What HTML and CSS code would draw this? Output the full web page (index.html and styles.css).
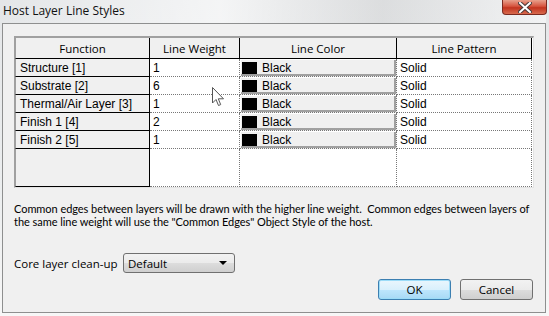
FILE: index.html
```html
<!DOCTYPE html>
<html lang="en">
<head>
  <meta charset="UTF-8">
  <title>Host Layer Line Styles</title>
  <link rel="stylesheet" href="styles.css">
</head>
<body>
  <div class="window">
    <!-- Title bar -->
    <div class="titlebar">
      <span class="title">Host Layer Line Styles</span>
      <button class="close" aria-label="Close">
        <svg width="14" height="11" viewBox="0 0 14 11">
          <path d="M2 1 L12 10 M12 1 L2 10" stroke="#4a3a3a" stroke-width="4" stroke-linecap="square"/>
          <path d="M2 1 L12 10 M12 1 L2 10" stroke="#fff" stroke-width="2" stroke-linecap="square"/>
        </svg>
      </button>
    </div>

    <div class="client">
      <!-- Layer grid -->
      <div class="grid">
        <div class="hcell">Function</div>
        <div class="hcell">Line Weight</div>
        <div class="hcell">Line Color</div>
        <div class="hcell">Line Pattern</div>

        <div class="fcell">Structure [1]</div>
        <div class="wcell">1</div>
        <div class="ccell"><span class="swatch"></span>Black</div>
        <div class="pcell">Solid</div>

        <div class="fcell">Substrate [2]</div>
        <div class="wcell">6</div>
        <div class="ccell"><span class="swatch"></span>Black</div>
        <div class="pcell">Solid</div>

        <div class="fcell">Thermal/Air Layer [3]</div>
        <div class="wcell">1</div>
        <div class="ccell"><span class="swatch"></span>Black</div>
        <div class="pcell">Solid</div>

        <div class="fcell">Finish 1 [4]</div>
        <div class="wcell">2</div>
        <div class="ccell"><span class="swatch"></span>Black</div>
        <div class="pcell">Solid</div>

        <div class="fcell">Finish 2 [5]</div>
        <div class="wcell">1</div>
        <div class="ccell"><span class="swatch"></span>Black</div>
        <div class="pcell">Solid</div>

        <div class="fcell filler"></div>
        <div class="wcell filler"></div>
        <div class="wcell filler"></div>
        <div class="pcell filler"></div>

        <!-- mouse pointer -->
        <svg class="pointer" width="13" height="20" viewBox="0 0 13 20">
          <path d="M0.5 0.5 L0.5 16 L4 12.5 L6.5 18.5 L8.7 17.6 L6.3 11.8 L11.5 11.8 Z" fill="#fff" stroke="#555" stroke-width="1"/>
        </svg>
      </div>

      <p class="note">Common edges between layers will be drawn with the higher line weight.&nbsp; Common edges between layers of<br>the same line weight will use the "Common Edges" Object Style of the host.</p>

      <div class="cleanup">
        <span>Core layer clean-up</span>
        <div class="select">
          <span>Default</span>
          <svg width="8" height="4" viewBox="0 0 8 4"><path d="M0 0 L8 0 L4 4 Z" fill="#000"/></svg>
        </div>
      </div>

      <div class="buttons">
        <button class="btn default">OK</button>
        <button class="btn">Cancel</button>
      </div>
    </div>
  </div>
</body>
</html>
```

FILE: styles.css
```css
* { box-sizing: border-box; margin: 0; padding: 0; }
body { width: 549px; height: 316px; overflow: hidden; font-family: "Open Sans", sans-serif; font-size: 11.5px; color: #000; }

.window {
  width: 549px; height: 316px;
  background: linear-gradient(to bottom, #e4e6e8 0, #eceeef 60%, #f7f7f7 100%);
  padding: 0 3px 3px 2px;
  display: flex; flex-direction: column;
}
.titlebar {
  height: 23px; display: flex; justify-content: space-between; align-items: flex-start;
  background: linear-gradient(to right, rgba(255,255,255,0) 0, rgba(255,255,255,0.6) 40%, rgba(200,200,200,0.3) 70%, rgba(255,255,255,0.5) 100%);
}
.title { font-size: 12px; padding: 2px 0 0 1px; color: #111; }
.close {
  width: 45px; height: 15px; border: 1px solid #7a2a20; border-top: none;
  border-radius: 0 0 4px 4px;
  background: linear-gradient(to bottom, #e8a08c 0, #d6543e 45%, #c2341f 55%, #d86a4e 100%);
  display: flex; align-items: center; justify-content: center;
  margin-right: -1px;
}

.client {
  flex: 1; background: #f0f0f0; border: 1px solid #8e8f8f;
  padding: 12px 11px 0 11px;
}

/* grid */
.grid {
  position: relative;
  width: 520px; height: 152px;
  display: grid;
  grid-template-columns: 135px 90px 157px 135px;
  grid-template-rows: 21px 18px 18px 18px 18px 18px 1fr;
  border: 1px solid #a0a0a0; border-right-color: #e3e3e3; border-bottom-color: #e3e3e3;
  border-top-width: 2px;
  background: #fff;
  font-family: "Liberation Sans", sans-serif; font-size: 12px;
}
.hcell {
  background: #f0f0f0; border-right: 1px solid #000; border-bottom: 1px solid #000;
  font-family: "Open Sans", sans-serif; font-size: 11.5px;
  display: flex; align-items: center; justify-content: center;
}
.hcell:first-child { border-left: 1px solid #a0a0a0; }
.fcell {
  background: #f0f0f0; border-right: 1px solid #000; border-bottom: 1px solid #000;
  border-left: 1px solid #a0a0a0;
  padding-left: 4px; display: flex; align-items: center;
}
.wcell, .pcell {
  border-right: 1px dotted #777; border-bottom: 1px dotted #777;
  padding-left: 3px; display: flex; align-items: center;
}
.ccell {
  border-right: 1px dotted #777; border-bottom: 1px dotted #777;
  background: #f0f0f0;
  box-shadow: inset 1px 1px 0 #fff, inset -2px -2px 0 #a0a0a0;
  display: flex; align-items: center; padding-left: 2px;
}
.swatch { width: 15px; height: 12px; background: #000; margin-right: 5px; }
.filler { background: #fff; }
.fcell.filler { background: #f0f0f0; }

.pointer { position: absolute; left: 197px; top: 49px; }

.note {
  margin-top: 14px; line-height: 13px; white-space: nowrap;
  font-family: "Lato", sans-serif; font-size: 11px; letter-spacing: -0.05px;
}

.cleanup { display: flex; align-items: center; margin-top: 25px; }
.cleanup > span { width: 109px; }
.select {
  width: 112px; height: 20px; border: 1px solid #707070; border-radius: 3px;
  background: linear-gradient(to bottom, #f2f2f2 0, #ebebeb 50%, #dddddd 51%, #cfcfcf 100%);
  display: flex; align-items: center; justify-content: space-between; padding: 0 7px 0 4px;
}

.buttons { display: flex; justify-content: flex-end; gap: 9px; margin-top: 6px; padding-right: 1px; }
.btn {
  width: 73px; height: 21px; font-family: "Open Sans", sans-serif; font-size: 11.5px;
  border: 1px solid #707070; border-radius: 3px;
  background: linear-gradient(to bottom, #f2f2f2 0, #ebebeb 50%, #dddddd 51%, #cfcfcf 100%);
}
.btn.default {
  border-color: #3c7fb1;
  background: linear-gradient(to bottom, #eaf6fd 0, #d9f0fc 50%, #bee6fd 51%, #a7d9f5 100%);
  box-shadow: inset 0 0 0 1px #9cdcf8;
}
```
